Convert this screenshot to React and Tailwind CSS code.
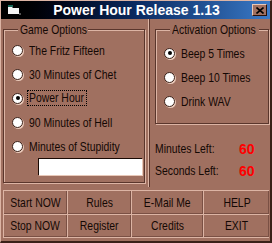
import React from "react";

function T({ children, className = "" }) {
  return (
    <span className={"inline-block whitespace-nowrap origin-left scale-x-[0.8] " + className}>
      {children}
    </span>
  );
}

function Radio({ label, checked, focused }) {
  return (
    <div className="flex items-center h-[24px]">
      <span className="w-[11px] h-[11px] rounded-full bg-white border border-[#3a2018] shadow-[1px_1px_0_#e8c8b8] flex items-center justify-center shrink-0">
        {checked && <span className="w-[4px] h-[4px] rounded-full bg-black" />}
      </span>
      {focused ? (
        <span className="ml-[5px] w-[58px] h-[14px] leading-[13px] pl-[1px] outline outline-1 outline-dotted outline-black">
          <T>{label}</T>
        </span>
      ) : (
        <span className="ml-[6px] leading-[13px]">
          <T>{label}</T>
        </span>
      )}
    </div>
  );
}

function GroupBox({ title, titleWidth, className, children }) {
  return (
    <fieldset
      className={
        "border border-[#5a362c] shadow-[inset_1px_1px_0_#dcb4a4,1px_1px_0_#dcb4a4] " +
        className
      }
    >
      <legend className="ml-[6px] px-[2px] bg-[#a07060] leading-[15px]">
        <span className="block overflow-visible" style={{ width: titleWidth }}>
          <T>{title}</T>
        </span>
      </legend>
      {children}
    </fieldset>
  );
}

function Btn({ label }) {
  return (
    <div className="flex items-center justify-center border-t border-l border-[#dcb4a4] shadow-[inset_-1px_-1px_0_#7a5044]">
      <span className="inline-block whitespace-nowrap origin-center scale-x-[0.8]">{label}</span>
    </div>
  );
}

export default function App() {
  return (
    <div
      className="w-[272px] h-[243px] bg-[#a07060] border-l border-t border-[#dcb4a4] border-r-2 border-b-2 border-r-[#3a2018] border-b-[#3a2018] flex flex-col text-[13px] text-[#140804] overflow-hidden"
      style={{ fontFamily: '"Liberation Sans", Arial, sans-serif' }}
    >
      <div className="h-[18px] flex items-center bg-gradient-to-r from-black via-[#0a2a60] to-[#3a7ac8]">
        <svg width="14" height="10" viewBox="0 0 14 10" className="ml-[6px]">
          <path d="M1 2h4l1 1h6v6H1z" fill="#f4f4f4" />
          <path d="M1 1h5" stroke="#30d0b0" strokeWidth="1" />
          <path d="M12 9h2" stroke="#a0a0a0" />
        </svg>
        <div className="flex-1 text-center text-white font-bold text-[14px] leading-[18px]">
          Power Hour Release 1.13
        </div>
        <div className="w-[15px] h-[12px] mr-[3px] bg-[#a07060] border-t border-l border-[#e8c8b8] border-r border-b border-r-[#2a1008] border-b-[#2a1008] flex items-center justify-center">
          <svg width="8" height="7" viewBox="0 0 8 7">
            <path d="M0.5 0.5l7 6M7.5 0.5l-7 6" stroke="#000" strokeWidth="1.6" />
          </svg>
        </div>
      </div>

      <div className="flex h-[168px]">
        <div className="w-[148px] pl-[2px] pt-[3px] border-r border-[#dcb4a4] shadow-[1px_0_0_#5a362c]">
          <GroupBox title="Game Options" titleWidth={66} className="w-[142px] h-[161px] pl-[8px]">
            <div className="pt-[1px]">
              <Radio label="The Fritz Fifteen" />
              <Radio label="30 Minutes of Chet" />
              <Radio label="Power Hour" checked focused />
              <Radio label="90 Minutes of Hell" />
              <Radio label="Minutes of Stupidity" />
              <div className="ml-[26px] w-[104px] h-[17px] bg-white border-t border-l border-[#1a0a04] shadow-[1px_1px_0_#e8c8b8]" />
            </div>
          </GroupBox>
        </div>
        <div className="flex-1 pl-[6px] pt-[3px]">
          <GroupBox title="Activation Options" titleWidth={85} className="w-[111px] h-[102px] pl-[8px]">
            <div className="pt-[4px]">
              <Radio label="Beep 5 Times" checked />
              <Radio label="Beep 10 Times" />
              <Radio label="Drink WAV" />
            </div>
          </GroupBox>
          <div className="mt-[17px] flex items-center h-[16px]">
            <span className="w-[84px]">
              <T>Minutes Left:</T>
            </span>
            <span className="text-[#ff0000] font-bold text-[14px]">60</span>
          </div>
          <div className="mt-[6px] flex items-center h-[16px]">
            <span className="w-[84px]">
              <T>Seconds Left:</T>
            </span>
            <span className="text-[#ff0000] font-bold text-[14px]">60</span>
          </div>
        </div>
      </div>

      <div className="mt-[3px] ml-[2px] w-[266px] h-[48px] grid grid-cols-[64px_64px_72px_66px] grid-rows-2 border-r border-b border-[#dcb4a4]">
        <Btn label="Start NOW" />
        <Btn label="Rules" />
        <Btn label="E-Mail Me" />
        <Btn label="HELP" />
        <Btn label="Stop NOW" />
        <Btn label="Register" />
        <Btn label="Credits" />
        <Btn label="EXIT" />
      </div>
    </div>
  );
}
